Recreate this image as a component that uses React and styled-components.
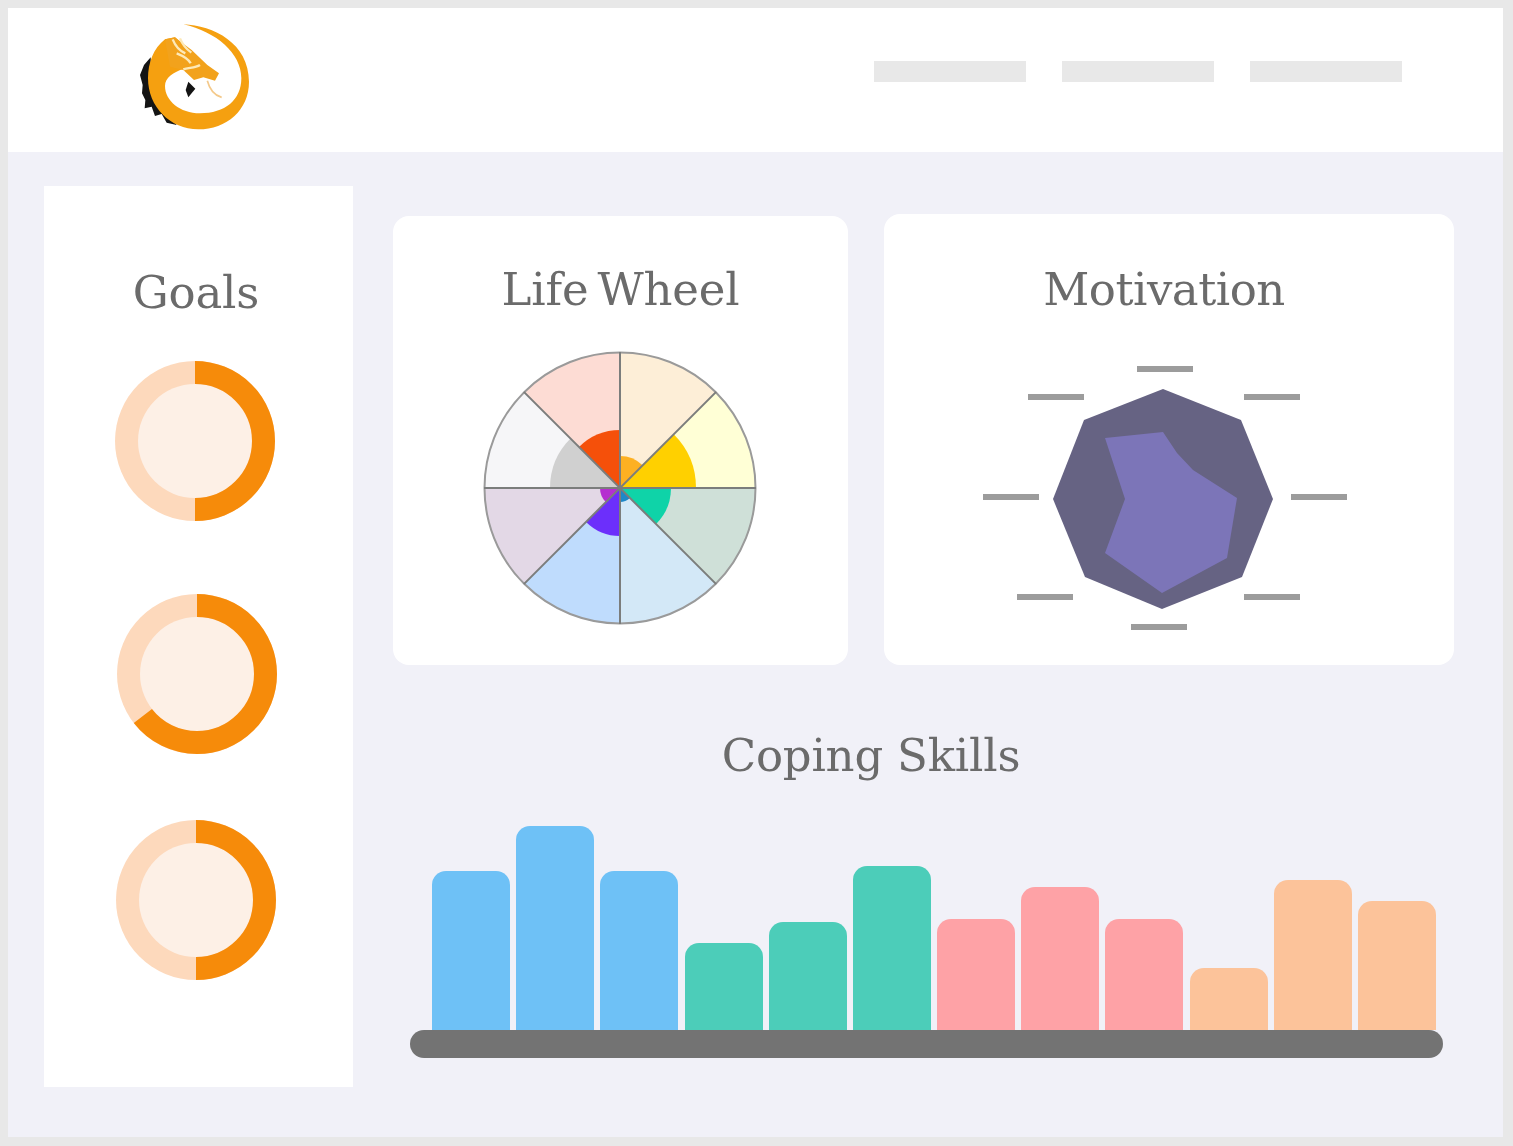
import styled, { createGlobalStyle } from "styled-components";

const GlobalStyle = createGlobalStyle`
  html, body {
    margin: 0;
    padding: 0;
    background: #e8e8e8;
  }
`;

const Frame = styled.div`
  width: 1513px;
  height: 1146px;
  box-sizing: border-box;
  padding: 8px 10px 9px 8px;
  background: #e8e8e8;
  display: flex;
  flex-direction: column;
  overflow: hidden;
  filter: blur(0.6px);
`;

const Header = styled.header`
  height: 144px;
  flex: none;
  background: #ffffff;
  display: flex;
  align-items: flex-start;
  justify-content: space-between;
  padding: 2px 101px 0 112px;
  box-sizing: border-box;
`;

const LogoBox = styled.svg`
  width: 150px;
  height: 130px;
  display: block;
`;

const NavLinks = styled.div`
  display: flex;
  gap: 36px;
  margin-top: 51px;
`;

const NavLink = styled.div`
  width: 152px;
  height: 21px;
  background: #e8e8e8;
`;

const Body = styled.main`
  flex: 1;
  background: #f1f1f8;
  display: flex;
  align-items: flex-start;
  gap: 40px;
  padding: 34px 0 0 36px;
`;

const Sidebar = styled.aside`
  width: 309px;
  height: 901px;
  flex: none;
  background: #ffffff;
  display: flex;
  flex-direction: column;
  align-items: center;
  box-sizing: border-box;
  padding: 79px 5px 0 0;
`;

const Title = styled.h2`
  margin: 0;
  font-family: "DejaVu Serif", "Liberation Serif", serif;
  font-weight: 400;
  font-size: 45px;
  line-height: 56px;
  letter-spacing: -0.2px;
  color: #6b6b6b;
  text-align: center;
`;

const WheelTitle = styled(Title)`
  word-spacing: -5px;
`;

const MotivationTitle = styled(Title)`
  margin-right: 10px;
  letter-spacing: -0.5px;
`;

const Donut = styled.svg`
  width: 160px;
  height: 160px;
  display: block;
  margin-top: ${(p) => p.$top}px;
  margin-left: ${(p) => p.$shift}px;
  flex: none;
`;

const Content = styled.div`
  flex: 1;
  display: flex;
  flex-direction: column;
  margin-top: 28px;
`;

const CardRow = styled.div`
  display: flex;
  align-items: flex-end;
  gap: 36px;
`;

const Card = styled.section`
  width: ${(p) => p.$width}px;
  height: ${(p) => p.$height}px;
  background: #ffffff;
  border-radius: 16px;
  display: flex;
  flex-direction: column;
  align-items: center;
  box-sizing: border-box;
  padding-top: ${(p) => p.$pad}px;
`;

const Wheel = styled.svg`
  width: 276px;
  height: 276px;
  display: block;
  margin: 32px 2px 0 0;
`;

const Radar = styled.svg`
  width: 364px;
  height: 268px;
  display: block;
  margin: 46px 8px 0 0;
`;

const Skills = styled.section`
  display: flex;
  flex-direction: column;
  margin-top: 63px;
`;

const SkillsTitle = styled(Title)`
  width: 956px;
`;

const Bars = styled.div`
  width: 1004px;
  height: 220px;
  margin: 26px 0 0 39px;
  display: flex;
  align-items: flex-end;
  justify-content: space-between;
`;

const Bar = styled.div`
  width: 78px;
  height: ${(p) => p.$height}px;
  background: ${(p) => p.$color};
  border-radius: 14px 14px 0 0;
`;

const Shelf = styled.div`
  width: 1033px;
  height: 28px;
  margin-left: 17px;
  background: #737373;
  border-radius: 14px;
`;

const ORANGE_LIGHT = "#fdd9bc";
const ORANGE_PALE = "#fdf0e6";
const ORANGE = "#f68b0a";

const donuts = [
  { pct: 50, top: 40, shift: -3 },
  { pct: 64.5, top: 73, shift: 1 },
  { pct: 50, top: 66, shift: -1 },
];

const wedges = [
  { light: "#fdeed7", strong: "#fdb022", r: 32 },
  { light: "#ffffd6", strong: "#ffd000", r: 76 },
  { light: "#cfe0d8", strong: "#0fd3a8", r: 51 },
  { light: "#d3e8f7", strong: "#1e88c8", r: 14 },
  { light: "#bfdcfd", strong: "#6c2ffb", r: 48 },
  { light: "#e3d8e6", strong: "#b52fd0", r: 20 },
  { light: "#f6f6f8", strong: "#d0d0d0", r: 70 },
  { light: "#fddcd4", strong: "#f5500a", r: 58 },
];

const ticks = [
  [1137, 369],
  [1028, 397],
  [1244, 397],
  [983, 497],
  [1291, 497],
  [1017, 597],
  [1244, 597],
  [1131, 627],
];

const bars = [
  [159, "#6ec1f6"],
  [204, "#6ec1f6"],
  [159, "#6ec1f6"],
  [87, "#4ccdb9"],
  [108, "#4ccdb9"],
  [164, "#4ccdb9"],
  [111, "#fea2a6"],
  [143, "#fea2a6"],
  [111, "#fea2a6"],
  [62, "#fcc39a"],
  [150, "#fcc39a"],
  [129, "#fcc39a"],
];

// pie slice around the wheel centre, i counts clockwise from 12 o'clock
const slice = (i, r) => {
  const a = (i * Math.PI) / 4;
  const b = ((i + 1) * Math.PI) / 4;
  const x1 = 138 + r * Math.sin(a);
  const y1 = 138 - r * Math.cos(a);
  const x2 = 138 + r * Math.sin(b);
  const y2 = 138 - r * Math.cos(b);
  return `M138 138L${x1} ${y1}A${r} ${r} 0 0 1 ${x2} ${y2}Z`;
};

const Logo = () => (
  <LogoBox viewBox="0 0 450 390">
    <path
      d="M92 142L72 165L60 195L68 225L66 250L76 270L74 295L95 290L105 318L125 312L140 338L170 345L130 290L95 230Z"
      fill="#141414"
    />
    <path
      d="M190 43C280 46 387 100 387 215C387 300 320 358 235 358C150 358 84 290 84 205C84 160 100 115 135 88L165 82L215 125L192 176C160 186 135 202 135 228C135 272 180 310 240 310C315 310 364 270 364 205C364 130 290 66 190 43Z"
      fill="#f5a010"
    />
    <path
      d="M135 88L165 82L182 95L215 120L262 165L297 190L285 212L250 202L222 210L190 180L150 170Z"
      fill="#f2a21c"
    />
    <path
      d="M158 88C166 108 178 122 196 130M180 85C188 105 200 118 214 128M170 130C190 138 205 145 212 160M190 178C205 172 225 175 240 165"
      stroke="#fde9b8"
      strokeWidth="7"
      fill="none"
    />
    <path d="M205 215L226 236L205 262L197 240Z" fill="#141414" />
    <path d="M262 212C268 235 280 255 305 262" stroke="#f4c98a" strokeWidth="5" fill="none" />
  </LogoBox>
);

const ProgressRing = ({ pct, top, shift }) => (
  <Donut viewBox="0 0 160 160" $top={top} $shift={shift}>
    <circle cx="80" cy="80" r="80" fill={ORANGE_LIGHT} />
    <circle cx="80" cy="80" r="57" fill={ORANGE_PALE} />
    <circle
      cx="80"
      cy="80"
      r="68.5"
      fill="none"
      stroke={ORANGE}
      strokeWidth="23"
      pathLength="100"
      strokeDasharray={`${pct} 100`}
      transform="rotate(-90 80 80)"
    />
  </Donut>
);

const LifeWheel = () => (
  <Wheel viewBox="0 0 276 276">
    {wedges.map((w, i) => (
      <g key={w.light}>
        <path d={slice(i, 136)} fill={w.light} />
        <path d={slice(i, w.r)} fill={w.strong} />
      </g>
    ))}
    <circle cx="138" cy="138" r="135.5" fill="none" stroke="#9a9a9a" strokeWidth="2" />
    {[0, 1, 2, 3].map((i) => (
      <line
        key={i}
        x1="138"
        y1="2"
        x2="138"
        y2="274"
        stroke="#7b7d7c"
        strokeWidth="2"
        transform={`rotate(${i * 45} 138 138)`}
      />
    ))}
  </Wheel>
);

const MotivationRadar = () => (
  <Radar viewBox="983 364 364 268">
    {ticks.map(([x, y]) => (
      <rect key={`${x}-${y}`} x={x} y={y - 3} width="56" height="6" fill="#9c9c9c" />
    ))}
    <polygon
      points="1163,389 1241,420 1273,499 1242,577 1162,609 1085,577 1053,499 1084,420"
      fill="#666383"
    />
    <polygon
      points="1105,438 1163,432 1177,453 1193,470 1237,498 1227,558 1162,593 1105,553 1125,499"
      fill="#7c75b8"
    />
  </Radar>
);

export default function App() {
  return (
    <Frame>
      <GlobalStyle />
      <Header>
        <Logo />
        <NavLinks>
          <NavLink />
          <NavLink />
          <NavLink />
        </NavLinks>
      </Header>
      <Body>
        <Sidebar>
          <Title>Goals</Title>
          {donuts.map((d, i) => (
            <ProgressRing key={i} {...d} />
          ))}
        </Sidebar>
        <Content>
          <CardRow>
            <Card $width={455} $height={449} $pad={46}>
              <WheelTitle>Life Wheel</WheelTitle>
              <LifeWheel />
            </Card>
            <Card $width={570} $height={451} $pad={48}>
              <MotivationTitle>Motivation</MotivationTitle>
              <MotivationRadar />
            </Card>
          </CardRow>
          <Skills>
            <SkillsTitle>Coping Skills</SkillsTitle>
            <Bars>
              {bars.map(([h, c], i) => (
                <Bar key={i} $height={h} $color={c} />
              ))}
            </Bars>
            <Shelf />
          </Skills>
        </Content>
      </Body>
    </Frame>
  );
}
